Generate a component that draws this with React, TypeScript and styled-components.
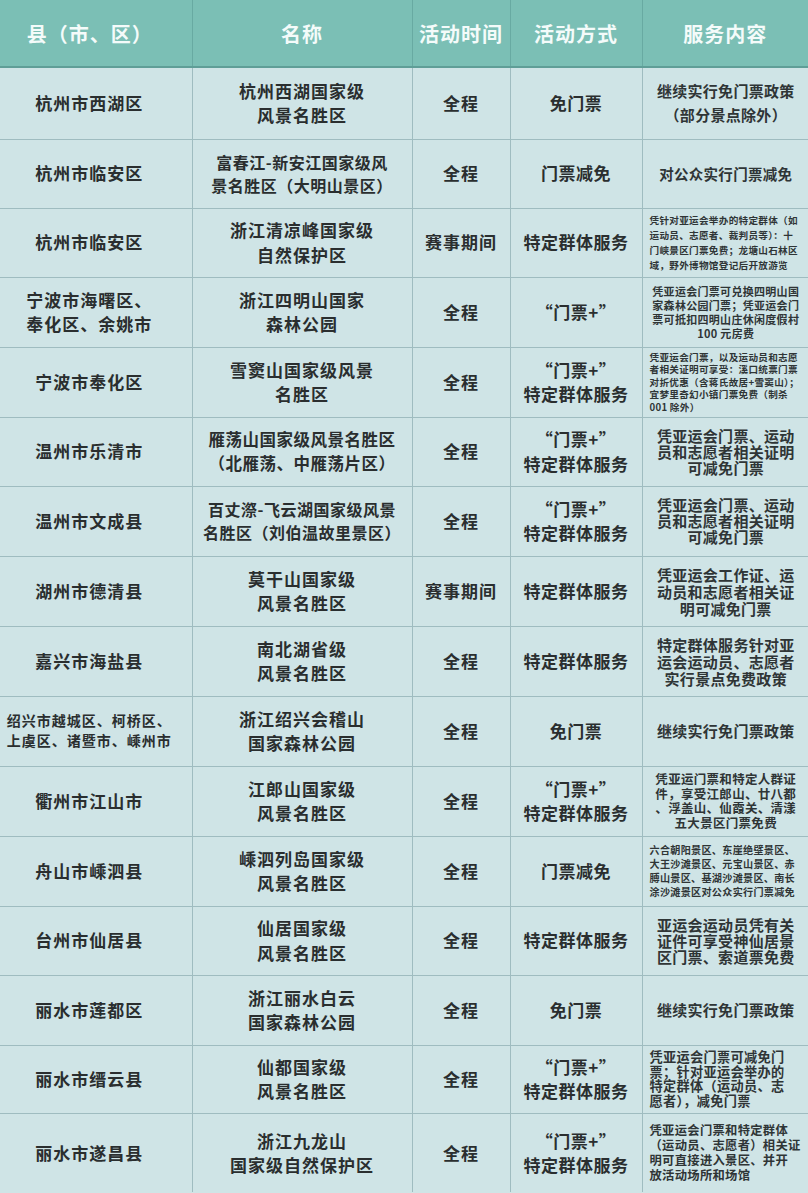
import React from "react";
import styled, { createGlobalStyle } from "styled-components";

const Global = createGlobalStyle`
  html, body { margin: 0; padding: 0; background: #cfe4e6; }
  body { font-family: "Noto Sans CJK SC", "Noto Sans", sans-serif; }
`;

const Table = styled.table`
  width: 808px;
  border-collapse: collapse;
  table-layout: fixed;
  background: #cfe4e6;
  color: #2a2e2f;
`;

const HeadRow = styled.tr`
  height: 67px;
  background: #7bbfb5;
  border-bottom: 2px solid #5f9e97;
`;

const Th = styled.th`
  color: #f4fbfa;
  font-size: 20px;
  font-weight: 700;
  letter-spacing: 1px;
  text-align: center;
  padding: 0;
  border-left: 1.5px solid #68aaa2;
  &:first-child { border-left: none; padding-right: 12px; }
`;

const Row = styled.tr<{ $h: number }>`
  height: ${(p) => p.$h}px;
  border-top: 1.5px solid #9fbcc0;
`;

const Td = styled.td<{ $size?: number; $ls?: number }>`
  font-size: ${(p) => p.$size ?? 17}px;
  letter-spacing: ${(p) => p.$ls ?? 1}px;
  line-height: 1.42;
  font-weight: 600;
  text-align: center;
  vertical-align: middle;
  padding: 0;
  white-space: pre-line;
  border-left: 1.5px solid #9fbcc0;
  &:first-child { border-left: none; padding-right: 13px; }
`;

const Note = styled.div<{ $size: number; $align: string; $lh: number }>`
  font-size: ${(p) => p.$size}px;
  line-height: ${(p) => p.$lh}px;
  text-align: ${(p) => p.$align};
  letter-spacing: 0.3px;
  font-weight: 600;
  color: #2f3536;
  padding: 0 6px 0 7px;
  white-space: pre-line;
`;

type RowData = {
  h: number;
  county: string;
  countySize?: number;
  name: string;
  nameSize?: number;
  time: string;
  mode: string;
  note: string;
  noteSize: number;
  noteLh: number;
  noteAlign: string;
};

const rows: RowData[] = [
  { h: 72, county: "杭州市西湖区", name: "杭州西湖国家级\n风景名胜区", time: "全程", mode: "免门票", note: "继续实行免门票政策\n（部分景点除外）", noteSize: 15, noteLh: 24, noteAlign: "center" },
  { h: 69, county: "杭州市临安区", name: "富春江-新安江国家级风\n景名胜区（大明山景区）", nameSize: 16, time: "全程", mode: "门票减免", note: "对公众实行门票减免", noteSize: 14.5, noteLh: 20, noteAlign: "center" },
  { h: 69, county: "杭州市临安区", name: "浙江清凉峰国家级\n自然保护区", time: "赛事期间", mode: "特定群体服务", note: "凭针对亚运会举办的特定群体（如\n运动员、志愿者、裁判员等）：十\n门峡景区门票免费；龙塘山石林区\n域，野外博物馆登记后开放游览", noteSize: 9.6, noteLh: 15, noteAlign: "left" },
  { h: 70, county: "宁波市海曙区、\n奉化区、余姚市", name: "浙江四明山国家\n森林公园", time: "全程", mode: "“门票+”", note: "凭亚运会门票可兑换四明山国\n家森林公园门票；凭亚运会门\n票可抵扣四明山庄休闲度假村\n100 元房费", noteSize: 11, noteLh: 14, noteAlign: "center" },
  { h: 70, county: "宁波市奉化区", name: "雪窦山国家级风景\n名胜区", time: "全程", mode: "“门票+”\n特定群体服务", note: "凭亚运会门票，以及运动员和志愿\n者相关证明可享受：溪口统票门票\n对折优惠（含蒋氏故居+雪窦山）；\n宜梦里奇幻小镇门票免费（制杀\n001 除外）", noteSize: 9.6, noteLh: 12.5, noteAlign: "left" },
  { h: 69, county: "温州市乐清市", name: "雁荡山国家级风景名胜区\n（北雁荡、中雁荡片区）", nameSize: 16.5, time: "全程", mode: "“门票+”\n特定群体服务", note: "凭亚运会门票、运动\n员和志愿者相关证明\n可减免门票", noteSize: 15, noteLh: 16, noteAlign: "center" },
  { h: 70, county: "温州市文成县", name: "百丈漈-飞云湖国家级风景\n名胜区（刘伯温故里景区）", nameSize: 16, time: "全程", mode: "“门票+”\n特定群体服务", note: "凭亚运会门票、运动\n员和志愿者相关证明\n可减免门票", noteSize: 15, noteLh: 16, noteAlign: "center" },
  { h: 70, county: "湖州市德清县", name: "莫干山国家级\n风景名胜区", time: "赛事期间", mode: "特定群体服务", note: "凭亚运会工作证、运\n动员和志愿者相关证\n明可减免门票", noteSize: 15, noteLh: 17, noteAlign: "center" },
  { h: 70, county: "嘉兴市海盐县", name: "南北湖省级\n风景名胜区", time: "全程", mode: "特定群体服务", note: "特定群体服务针对亚\n运会运动员、志愿者\n实行景点免费政策", noteSize: 15, noteLh: 17, noteAlign: "center" },
  { h: 70, county: "绍兴市越城区、柯桥区、\n上虞区、诸暨市、嵊州市", countySize: 14, name: "浙江绍兴会稽山\n国家森林公园", time: "全程", mode: "免门票", note: "继续实行免门票政策", noteSize: 15, noteLh: 20, noteAlign: "center" },
  { h: 70, county: "衢州市江山市", name: "江郎山国家级\n风景名胜区", time: "全程", mode: "“门票+”\n特定群体服务", note: "凭亚运门票和特定人群证\n件，享受江郎山、廿八都\n、浮盖山、仙霞关、清漾\n五大景区门票免费", noteSize: 12.5, noteLh: 14.5, noteAlign: "center" },
  { h: 70, county: "舟山市嵊泗县", name: "嵊泗列岛国家级\n风景名胜区", time: "全程", mode: "门票减免", note: "六合朝阳景区、东崖绝壁景区、\n大王沙滩景区、元宝山景区、赤\n膊山景区、基湖沙滩景区、南长\n涂沙滩景区对公众实行门票减免", noteSize: 10.1, noteLh: 14, noteAlign: "left" },
  { h: 69, county: "台州市仙居县", name: "仙居国家级\n风景名胜区", time: "全程", mode: "特定群体服务", note: "亚运会运动员凭有关\n证件可享受神仙居景\n区门票、索道票免费", noteSize: 15, noteLh: 16, noteAlign: "center" },
  { h: 70, county: "丽水市莲都区", name: "浙江丽水白云\n国家森林公园", time: "全程", mode: "免门票", note: "继续实行免门票政策", noteSize: 15, noteLh: 20, noteAlign: "center" },
  { h: 68, county: "丽水市缙云县", name: "仙都国家级\n风景名胜区", time: "全程", mode: "“门票+”\n特定群体服务", note: "凭亚运会门票可减免门\n票；针对亚运会举办的\n特定群体（运动员、志\n愿者），减免门票", noteSize: 13.2, noteLh: 14.5, noteAlign: "left" },
  { h: 79, county: "丽水市遂昌县", name: "浙江九龙山\n国家级自然保护区", time: "全程", mode: "“门票+”\n特定群体服务", note: "凭亚运会门票和特定群体\n（运动员、志愿者）相关证\n明可直接进入景区、并开\n放活动场所和场馆", noteSize: 12.3, noteLh: 15, noteAlign: "left" },
];

export default function App() {
  return (
    <>
      <Global />
      <Table>
        <colgroup>
          <col style={{ width: 192 }} />
          <col style={{ width: 220 }} />
          <col style={{ width: 98 }} />
          <col style={{ width: 132 }} />
          <col style={{ width: 166 }} />
        </colgroup>
        <thead>
          <HeadRow>
            <Th>县（市、区）</Th>
            <Th>名称</Th>
            <Th>活动时间</Th>
            <Th>活动方式</Th>
            <Th>服务内容</Th>
          </HeadRow>
        </thead>
        <tbody>
          {rows.map((r, i) => (
            <Row key={i} $h={r.h}>
              <Td $size={r.countySize}>{r.county}</Td>
              <Td $size={r.nameSize} $ls={r.nameSize ? 0.5 : 1}>{r.name}</Td>
              <Td>{r.time}</Td>
              <Td $ls={0.5}>{r.mode}</Td>
              <Td>
                <Note $size={r.noteSize} $lh={r.noteLh} $align={r.noteAlign}>
                  {r.note}
                </Note>
              </Td>
            </Row>
          ))}
        </tbody>
      </Table>
    </>
  );
}
